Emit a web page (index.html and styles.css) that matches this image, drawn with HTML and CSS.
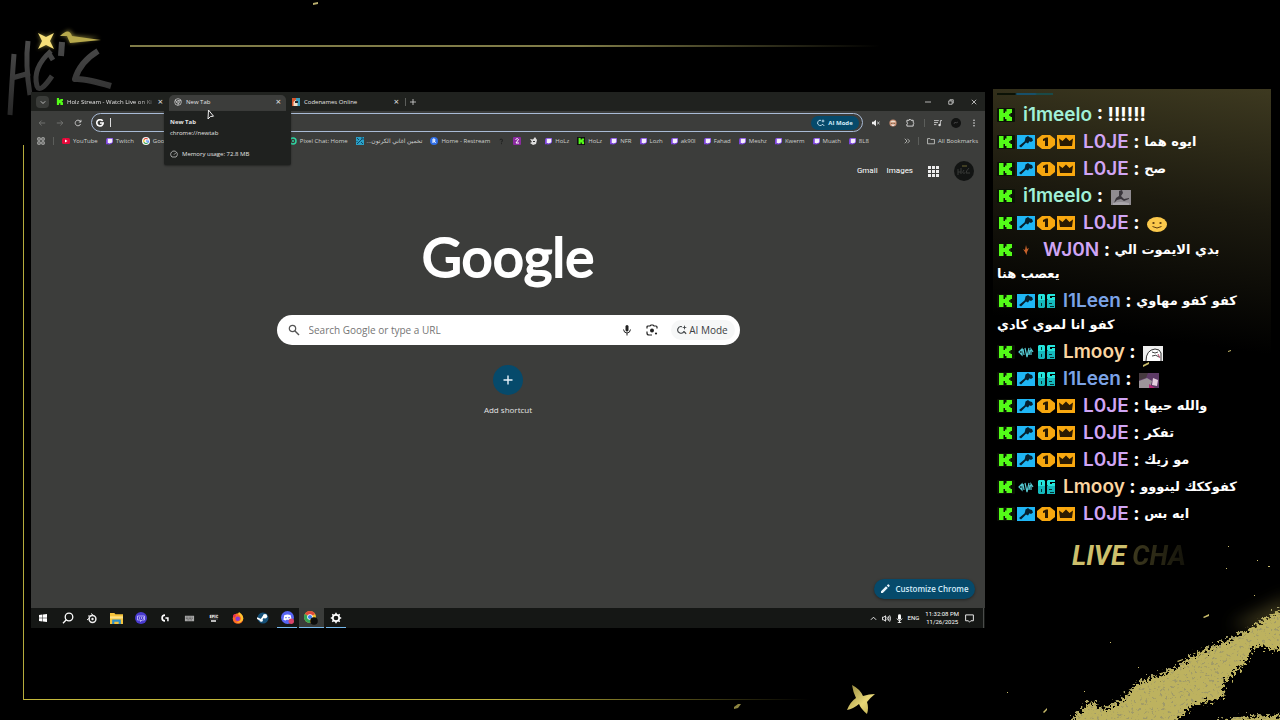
FILE: index.html
```html
<!DOCTYPE html>
<html lang="en">
<head>
  <meta charset="UTF-8">
  <meta name="viewport" content="width=device-width, initial-scale=1.0">
  <title>Holz Stream</title>
  <link rel="stylesheet" href="styles.css">
</head>
<body>
  <!-- shared icons -->
  <svg class="sprite" aria-hidden="true">
    <symbol id="kick" viewBox="0 0 18 14">
      <rect width="18" height="14" rx="1" fill="#0b1206"/>
      <path d="M2 1h4.500v4H8V3.500h1.500V1H15v4h-1.500v1.300H12v1.400h1.500V9H15v4H9.500v-2H8V9H6.500v4H2z" fill="#53fc18"/>
    </symbol>
    <symbol id="mod" viewBox="0 0 18 14">
      <rect width="18" height="14" fill="#1fb6f5"/>
      <path d="M8.500 2.500 11 1l1.500 1.200 2.500.8 1 2.500-2 1.500-1.500-.7-1.500 2.200-2-1L4 12.500 2 11l5.500-4.500L8 5z" fill="#06202e"/>
    </symbol>
    <symbol id="one" viewBox="0 0 18 14">
      <path d="M5 0h8l5 4v6l-5 4H5l-5-4V4z" fill="#f7a70f"/>
      <path d="M6 4 9 2.500h2V11H8V5.400L6 6z" fill="#2a1a02"/>
    </symbol>
    <symbol id="crown" viewBox="0 0 18 14">
      <rect width="18" height="14" fill="#f9a80f"/>
      <path d="M2 3.500 5.500 6 9 2.500 12.500 6 16 3.500 15 11H3z" fill="#2a1a02"/>
    </symbol>
    <symbol id="og" viewBox="0 0 18 14">
      <path d="M2 0h5l1 1v5H1V1zM11 0h7v2h-5v2h2V3h3v3h-7l-1-1V1z" fill="#24e5dc"/>
      <path d="M1 6h7v7l-1 1H2l-1-1zM10 6h8v8h-8z" fill="#16b9bd"/>
      <path d="M4 2h1v3H4zM4 9h1v3H4zM12 9h3v1h-3zM13 12h4v1h-4z" fill="#053437"/>
    </symbol>
    <symbol id="wing" viewBox="0 0 18 14">
      <path d="M2 7l3-3v6zM6 4l1 6M8 3l2 9 2-9M13 5l-1 5M16 7l-2-3v6" fill="none" stroke="#55c9d2" stroke-width="1.200"/>
    </symbol>
    <symbol id="flame" viewBox="0 0 18 14">
      <path d="M9 2l1 4 2-1-2 4-.5 3L8 9 6 6l2 1z" fill="#c8622b"/>
    </symbol>
    <symbol id="twitch" viewBox="0 0 8 8">
      <path d="M1 0h7v5L5.500 7H4L3 8V7H0V2z" fill="#7d45dd"/>
      <path d="M2 .8h5.200v3.700L6 5.600H4.500l-1 1v-1H2z" fill="#f4eefc"/>
    </symbol>
    <symbol id="kickmark" viewBox="0 0 8 8">
      <path d="M1 0h2.500v2H5V1h3v2L6.500 4 8 5v3H5V6H3.500v2H1z" fill="#53fc18"/>
    </symbol>
    <symbol id="spark" viewBox="0 0 12 12">
      <path d="M6 2A4 4 0 1 0 8.500 7.500M8 7.500l3 3" fill="none" stroke="currentColor" stroke-width="1.300"/>
      <path d="M9 0l.7 2.300L12 3l-2.300.7L9 6l-.7-2.300L6 3l2.300-.7z" fill="currentColor"/>
    </symbol>
    <symbol id="chrome" viewBox="0 0 12 12">
      <circle cx="6" cy="6" r="6" fill="#f2c230"/>
      <path d="M6 6 .8 3A6 6 0 0 1 11.200 3z" fill="#e04a3c"/>
      <path d="M6 6 .8 3A6 6 0 0 0 6 12z" fill="#35a457"/>
      <circle cx="6" cy="6" r="2.800" fill="#fff"/>
      <circle cx="6" cy="6" r="2.100" fill="#3d7ee8"/>
    </symbol>
  </svg>

  <div class="stage">
    <div class="frame-top"></div>
    <div class="frame-left"></div>

    <svg class="holz" viewBox="0 0 330 110" width="330" height="110" role="img" aria-label="Holz">
      <defs>
        <linearGradient id="fade" gradientUnits="userSpaceOnUse" x1="0" y1="30" x2="0" y2="110">
          <stop offset="0" stop-color="#4c4c4c"/>
          <stop offset="1" stop-color="#262626"/>
        </linearGradient>
        <filter id="glow" x="-50%" y="-50%" width="200%" height="200%">
          <feGaussianBlur stdDeviation="2"/>
        </filter>
      </defs>
      <g stroke="url(#fade)" fill="none" stroke-linejoin="round">
        <path d="M14 46Q12 72 10 107M28 33Q25 56 30 87M12 70L30 65" stroke-width="5"/>
        <path d="M51 43Q32 60 37 78Q40 86 52 68M48 44l5 8" stroke-width="5"/>
        <path d="M62 34l-1 14" stroke-width="6"/>
        <path d="M98 43Q80 54 75 71Q84 70 111 78" stroke-width="6"/>
      </g>
      <g fill="#d8c95a" filter="url(#glow)" opacity=".6">
        <path d="M38 25l8 4 8-4-4 8 4 8-8-4-8 4 4-8z"/>
        <path d="M60 28l9-6 5 6 26 2-30 5-3-7z"/>
      </g>
      <path d="M38 25l8 4 8-4-4 8 4 8-8-4-8 4 4-8z" fill="#f6df79"/>
      <path d="M60 28q9-9 12 0l29 4-31 3-3-7z" fill="#b7a94c"/>
      <path d="M313 -5l5-1v2l-5 1z" fill="#b9ae6e"/>
    </svg>

    <main class="desktop">
      <section class="window">
        <div class="tab-strip">
          <button class="tab-search" aria-label="Search tabs">
            <svg viewBox="0 0 8 8" width="6" height="6"><path d="M1 3l3 3 3-3" class="line"/></svg>
          </button>
          <div class="tab">
            <svg width="7" height="7"><use href="#kickmark"/></svg>
            <span class="tab-title faded">Holz Stream - Watch Live on Ki</span>
            <button class="tab-close" aria-label="Close">×</button>
          </div>
          <div class="tab active">
            <svg viewBox="0 0 12 12" width="8" height="8"><circle cx="6" cy="6" r="5" class="line"/><circle cx="6" cy="6" r="2" class="line"/><path d="M6 4h5M4.300 7L2 3M7.700 7L5.500 11" class="line"/></svg>
            <span class="tab-title">New Tab</span>
            <button class="tab-close" aria-label="Close">×</button>
            <div class="tab-card" role="tooltip">
              <strong>New Tab</strong>
              <span>chrome://newtab</span>
              <p>
                <svg viewBox="0 0 12 12" width="8" height="8"><path d="M3 10.500A5 5 0 1 1 9 10.500zM6 7l3-3" class="line"/></svg>
                Memory usage: 72.8 MB
              </p>
            </div>
            <svg class="cursor" viewBox="0 0 8 11" width="8" height="11"><path d="M1.500 1l5 6.200-3 .3L1 10z" fill="#222" stroke="#eee"/></svg>
          </div>
          <div class="tab">
            <svg viewBox="0 0 8 8" width="8" height="8"><path d="M0 0h4v8H0z" fill="#d4572e"/><path d="M4 0h4v8H4z" fill="#3c9dbb"/><path d="M1.500 8V4l2-2 2 2v4z" fill="#f3dfc8"/><path d="M3 3h3v2H3z" fill="#25252a"/></svg>
            <span class="tab-title">Codenames Online</span>
            <button class="tab-close" aria-label="Close">×</button>
          </div>
          <i class="rule"></i>
          <button class="new-tab" aria-label="New tab">
            <svg viewBox="0 0 8 8" width="6" height="6"><path d="M4 0v8M0 4h8" class="line"/></svg>
          </button>
          <div class="window-buttons">
            <button aria-label="Minimize"><svg viewBox="0 0 8 8" width="6" height="6"><path d="M0 4h8" class="line"/></svg></button>
            <button aria-label="Restore"><svg viewBox="0 0 8 8" width="6" height="6"><path d="M1 2.500h4.500V7H1zM2.500 2V1H7v4.500H6" class="line"/></svg></button>
            <button aria-label="Close window"><svg viewBox="0 0 8 8" width="6" height="6"><path d="M1 1l6 6M7 1L1 7" class="line"/></svg></button>
          </div>
        </div>

        <div class="toolbar">
          <button class="dim" aria-label="Back"><svg viewBox="0 0 10 10" width="8" height="8"><path d="M9 5H1.500M4.500 2l-3 3 3 3" class="line"/></svg></button>
          <button class="dim" aria-label="Forward"><svg viewBox="0 0 10 10" width="8" height="8"><path d="M1 5h7.500M5.500 2l3 3-3 3" class="line"/></svg></button>
          <button aria-label="Reload"><svg viewBox="0 0 10 10" width="8" height="8"><path d="M8.300 6.200A3.500 3.500 0 1 1 7.500 2.500L8.500 3.500M8.700 1v2.800H6" class="line"/></svg></button>
          <div class="omnibox">
            <svg viewBox="0 0 10 10" width="8" height="8"><path d="M8.300 2.500A4 4 0 1 0 9 5H5" fill="none" stroke="#fff" stroke-width="2"/></svg>
            <i class="caret"></i>
            <input type="text" aria-label="Address and search bar">
            <button class="ai-chip"><svg width="8" height="8"><use href="#spark"/></svg>AI Mode</button>
          </div>
          <div class="extensions">
            <button aria-label="Muted"><svg viewBox="0 0 10 10" width="8" height="8"><path d="M0 3.500h2L5 1v8L2 6.500H0z" fill="#eee"/><path d="M6.500 3.500l3 3M9.500 3.500l-3 3" class="line"/></svg></button>
            <button aria-label="Extension"><svg viewBox="0 0 10 10" width="8" height="8"><circle cx="5" cy="5" r="4.500" fill="#c98c70"/><path d="M1 4q4-4 8 0z" fill="#eadfcf"/><path d="M3 5h1v1H3zM6 5h1v1H6z" fill="#342"/><path d="M2 7h6l-3 2z" fill="#eee"/></svg></button>
            <button aria-label="Extensions"><svg viewBox="0 0 10 10" width="9" height="9"><path d="M1 2.500h2.500Q4-.2 5.500 2.500H8v2.300q2 1 0 2V9H1V6.700q2-1 0-2z" class="line"/></svg></button>
            <i class="rule"></i>
            <button aria-label="Media"><svg viewBox="0 0 10 10" width="8" height="8"><path d="M0 2h6M0 4.500h5M0 7h3M8 7V2h2" class="line"/><circle cx="7" cy="7.500" r="1.500" fill="#ddd"/></svg></button>
            <button aria-label="Profile"><svg viewBox="0 0 10 10" width="10" height="10"><circle cx="5" cy="5" r="5" fill="#121312"/><path d="M3 6l1-2 1 1 2-1" stroke="#555" stroke-width=".6" fill="none"/></svg></button>
            <button aria-label="Menu"><svg viewBox="0 0 10 10" width="8" height="8"><g fill="#ddd"><circle cx="5" cy="1.500" r="1"/><circle cx="5" cy="5" r="1"/><circle cx="5" cy="8.500" r="1"/></g></svg></button>
          </div>
        </div>

        <nav class="bookmarks">
          <button aria-label="Apps"><svg viewBox="0 0 10 10" width="8" height="8"><path d="M1 1h3v3H1zM6 1h3v3H6zM1 6h3v3H1zM6 6h3v3H6z" class="line"/></svg></button>
          <i class="rule"></i>
          <a href="#"><svg viewBox="0 0 8 8" width="8" height="8"><rect y="1" width="8" height="6" rx="1.500" fill="#e5093a"/><path d="M3 2.500L5.500 4 3 5.500z" fill="#fff"/></svg>YouTube</a>
          <a href="#"><svg width="7" height="7"><use href="#twitch"/></svg>Twitch</a>
          <a href="#" class="covered"><svg viewBox="0 0 12 12" width="8" height="8"><circle cx="6" cy="6" r="6" fill="#f5f5f5"/><path d="M3 4a3.500 3.500 0 0 1 5.500-.8" stroke="#e34133" stroke-width="1.600" fill="none"/><path d="M3 4q-.8 2 0 4" stroke="#f4b400" stroke-width="1.600" fill="none"/><path d="M3 8a3.600 3.600 0 0 0 5.500.8" stroke="#33a853" stroke-width="1.600" fill="none"/><path d="M8.500 8.800Q9.800 7.500 9.500 6H6" stroke="#4285f4" stroke-width="1.600" fill="none"/></svg>Google</a>
          <a href="#"><svg viewBox="0 0 8 8" width="8" height="8"><circle cx="4" cy="4" r="3" stroke="#2ed3a0" stroke-width="1.500" fill="none"/><circle cx="4" cy="4" r="1" fill="#2ed3a0"/></svg>Pixel Chat: Home</a>
          <a href="#"><svg viewBox="0 0 8 8" width="8" height="8"><path d="M0 0h8v8H0z" fill="#2aa0c6"/><path d="M1 1l2 2M5 1h2v2M1 7l5-5M5 5l2 2M1 4v1" stroke="#0d4867" fill="none"/></svg><span lang="ar" dir="rtl">تخمين اغاني الكرتون...</span></a>
          <a href="#"><svg viewBox="0 0 8 8" width="8" height="8"><circle cx="4" cy="4" r="4" fill="#2f6ee6"/><path d="M3 6V2h1.500q1 1 0 2H3M4.300 4L5.500 6" stroke="#fff" fill="none"/></svg>Home - Restream</a>
          <a href="#" aria-label="Saved page"><svg viewBox="0 0 8 8" width="7" height="7"><path d="M2 2q3-2 3 1L4 5M4 6v1" stroke="#171817" fill="none"/></svg></a>
          <a href="#" aria-label="Saved page"><svg viewBox="0 0 8 8" width="8" height="8"><rect width="8" height="8" rx="1" fill="#8b2aa0"/><path d="M2.500 2.500q2-2 3 0L3 6h3" stroke="#fff" fill="none"/></svg></a>
          <a href="#" aria-label="Saved page"><svg viewBox="0 0 8 8" width="8" height="8"><path d="M1 2l3 .5L6 0l2 3-1 4-3 1-3-2 2-1z" fill="#dcdcdc"/><path d="M4 4h2v1H4z" fill="#333"/></svg></a>
          <a href="#"><svg width="7" height="7"><use href="#twitch"/></svg>HoLz</a>
          <a href="#"><svg viewBox="-1 -1 10 10" width="8" height="8"><path d="M-1-1h10V9H-1z" fill="#111"/><use href="#kickmark" width="8" height="8"/></svg>HoLz</a>
          <a href="#"><svg width="7" height="7"><use href="#twitch"/></svg>NFR</a>
          <a href="#"><svg width="7" height="7"><use href="#twitch"/></svg>Lozh</a>
          <a href="#"><svg width="7" height="7"><use href="#twitch"/></svg>ak90l</a>
          <a href="#"><svg width="7" height="7"><use href="#twitch"/></svg>Fahad</a>
          <a href="#"><svg width="7" height="7"><use href="#twitch"/></svg>Meshz</a>
          <a href="#"><svg width="7" height="7"><use href="#twitch"/></svg>Kwerm</a>
          <a href="#"><svg width="7" height="7"><use href="#twitch"/></svg>Muath</a>
          <a href="#"><svg width="7" height="7"><use href="#twitch"/></svg>8L8</a>
          <div class="bookmarks-end">
            <button aria-label="More bookmarks"><svg viewBox="0 0 8 8" width="6" height="6"><path d="M1 1l3 3-3 3M4.500 1l3 3-3 3" class="line"/></svg></button>
            <i class="rule"></i>
            <a href="#"><svg viewBox="0 0 10 10" width="8" height="8"><path d="M.7 2h3l1 1h4.600v5.500H.7z" class="line"/></svg>All Bookmarks</a>
          </div>
        </nav>

        <div class="page">
          <header class="page-links">
            <a href="#">Gmail</a>
            <a href="#">Images</a>
            <button aria-label="Google apps"><svg viewBox="0 0 11 11" width="11" height="11"><g fill="#eee"><path d="M0 0h3v3H0zM4 0h3v3H4zM8 0h3v3H8zM0 4h3v3H0zM4 4h3v3H4zM8 4h3v3H8zM0 8h3v3H0zM4 8h3v3H4zM8 8h3v3H8z"/></g></svg></button>
            <button aria-label="Account"><svg viewBox="0 0 20 20" width="20" height="20"><circle cx="10" cy="10" r="10" fill="#121413"/><path d="M4 8v6M7 7v6M4 11h3M10 9q-3 4 1 3M15 7q-3 3-3 5l4 0" stroke="#383a38" fill="none"/><path d="M8 5l5 0" stroke="#6d6732"/></svg></button>
          </header>
          <h1 class="google">Google</h1>
          <form class="search">
            <svg viewBox="0 0 12 12" width="12" height="12"><circle cx="4.500" cy="4.500" r="3.200" fill="none" stroke="#555" stroke-width="1.200"/><path d="M7 7l4 4" stroke="#555" stroke-width="1.400"/></svg>
            <input type="text" placeholder="Search Google or type a URL" aria-label="Search Google or type a URL">
            <button type="button" aria-label="Voice search"><svg viewBox="0 0 12 12" width="12" height="12"><rect x="4.500" y="1" width="3" height="6.500" rx="1.500" fill="#222"/><path d="M2.500 5.500q.5 3.500 3.500 3.500t3.500-3.500M6 9v2.500" fill="none" stroke="#222"/></svg></button>
            <button type="button" aria-label="Image search"><svg viewBox="0 0 12 12" width="12" height="12"><path d="M1 4.500V3q0-1 1-1h2l1-1h2l1 1h2q1 0 1 1v1.500M1 7.500V9q0 2 2 2h3" fill="none" stroke="#222" stroke-width="1.200"/><circle cx="6" cy="6.500" r="2" fill="#222"/><circle cx="10" cy="9.500" r="1.100" fill="#222"/></svg></button>
            <button type="button" class="ai-mode"><svg width="10" height="10"><use href="#spark"/></svg>AI Mode</button>
          </form>
          <button class="shortcut">
            <span class="plus"><svg viewBox="0 0 10 10" width="10" height="10"><path d="M5 .5v9M.5 5h9" stroke="#e8f4fb" stroke-width="1.400"/></svg></span>
            Add shortcut
          </button>
          <button class="customize">
            <svg viewBox="0 0 10 10" width="10" height="10"><path d="M1 7.200L6 2.200 7.800 4l-5 5H1zM6.800 1.400l1-1q.5-.3 1 .2l.7.700q.4.500 0 1l-1 1z" fill="#e8f4fb"/></svg>
            Customize Chrome
          </button>
        </div>
      </section>

      <footer class="taskbar">
        <div class="apps">
          <button aria-label="Start"><svg viewBox="0 0 10 10" width="10" height="10"><path d="M1 2l3.500-.5v3.200H1zM5 1.400L9 1v3.700H5zM1 5.200h3.500v3.300L1 8zM5 5.200h4V9l-4-.5z" fill="#fff"/></svg></button>
          <button aria-label="Search"><svg viewBox="0 0 12 12" width="12" height="12"><circle cx="7" cy="5" r="3.800" fill="none" stroke="#fff" stroke-width="1.300"/><path d="M4.300 7.800L1 11.200" stroke="#fff" stroke-width="1.300"/></svg></button>
          <button aria-label="Blender"><svg viewBox="0 0 12 12" width="12" height="12"><circle cx="6.500" cy="7" r="3.400" fill="none" stroke="#eee" stroke-width="1.500"/><circle cx="6.500" cy="7" r="1.200" fill="#eee"/><path d="M1 8l3-2.500M5 1.500l2.500 2M2 4h3" stroke="#eee"/></svg></button>
          <button aria-label="Files"><svg viewBox="0 0 12 12" width="13" height="13"><path d="M0 1h4l1 1h7v9H0z" fill="#f5c33b"/><path d="M0 4h12v2H0z" fill="#ffe083"/><path d="M2 11V7h8v4H8V9H4v2z" fill="#2d8fc9"/></svg></button>
          <button aria-label="Voice app"><svg viewBox="0 0 12 12" width="12" height="12"><circle cx="6" cy="6" r="6" fill="#4a3bd0"/><path d="M2.500 4h7v4H7L5.500 9.500V8h-3z" fill="none" stroke="#c9c2ff" stroke-width=".8"/><path d="M4 6h1M6 6h1M8 6h1" stroke="#fff"/></svg></button>
          <button aria-label="G Hub"><svg viewBox="0 0 12 12" width="10" height="10"><path d="M6 2.500A3.500 3.500 0 0 0 6 9.500" fill="none" stroke="#fff" stroke-width="2"/><path d="M6.500 6h3v4" fill="none" stroke="#fff" stroke-width="1.800"/></svg></button>
          <button aria-label="Keyboard"><svg viewBox="0 0 12 12" width="11" height="11"><rect x="1" y="3" width="10" height="6" fill="#aaa"/><path d="M2 4.500h8M2 6h8M3 7.500h6" stroke="#333" stroke-width=".7" stroke-dasharray="1 .6"/></svg></button>
          <button class="epic" aria-label="Epic Games"><span>EPIC</span><i></i></button>
          <button aria-label="Firefox"><svg viewBox="0 0 12 12" width="12" height="12"><circle cx="6" cy="6.500" r="5.300" fill="#ff6a26"/><path d="M7 0q5 3 4 8Q8 12 4 10q5 0 5-4-1-3-3-4z" fill="#ffc12e"/><circle cx="5.700" cy="6.700" r="2.300" fill="#8c3bd4"/><path d="M1 3l2-1 1 2-2 2z" fill="#e72f59"/></svg></button>
          <button aria-label="Steam"><svg viewBox="0 0 12 12" width="12" height="12"><circle cx="6" cy="6" r="5.500" fill="#155078"/><path d="M0 6l4 2 3-4" stroke="#fff" stroke-width="1.800" fill="none"/><circle cx="8" cy="4.300" r="2.200" fill="#fff"/><circle cx="4.300" cy="8.300" r="1.500" fill="#fff"/></svg></button>
          <button class="running" aria-label="Discord"><svg viewBox="0 0 12 12" width="13" height="13"><circle cx="6" cy="6" r="6" fill="#5865f2"/><path d="M3 4q3-1.500 6 0l.8 4-2 .800L7 8H5l-.8.8-2-.8z" fill="#fff"/><path d="M4 5.500h1.200v1.200H4zM6.800 5.500H8v1.200H6.800z" fill="#5865f2"/><circle cx="9.500" cy="9.500" r="2.500" fill="#d9446a"/></svg></button>
          <button class="running current" aria-label="Chrome"><svg viewBox="0 0 14 14" width="14" height="14"><use href="#chrome" width="12" height="12"/><circle cx="10" cy="10" r="3.800" fill="#0d0e0d"/></svg></button>
          <button class="running" aria-label="Settings"><svg viewBox="0 0 12 12" width="12" height="12"><circle cx="6" cy="6" r="3.200" fill="none" stroke="#fff" stroke-width="1.700"/><path d="M6 .8v2M6 9.200v2M.8 6h2M9.200 6h2M2.300 2.300l1.400 1.400M8.300 8.300l1.400 1.400M9.700 2.300L8.300 3.700M3.700 8.300L2.300 9.700" stroke="#fff" stroke-width="1.500"/></svg></button>
        </div>
        <div class="tray">
          <button aria-label="Hidden icons"><svg viewBox="0 0 8 8" width="7" height="7"><path d="M1 5.500L4 2.500l3 3" class="line"/></svg></button>
          <button aria-label="Volume"><svg viewBox="0 0 10 10" width="9" height="9"><path d="M.5 3.500h1.500L4 2v6L2 6.500H.5zM5.500 3.500q1 1.500 0 3M7 2.500q1.500 2.500 0 5M8.500 1.500q2 3.500 0 7" class="line"/></svg></button>
          <button aria-label="Microphone"><svg viewBox="0 0 8 10" width="7" height="9"><rect x="2.300" width="3.400" height="6.500" rx="1.700" fill="#fff"/><path d="M1 5q3 5 6 0M4 7v2.500M2 9.500h4" stroke="#fff" fill="none"/></svg></button>
          <span>ENG</span>
          <time datetime="2025-11-26T23:32:08">11:32:08 PM<br>11/26/2025</time>
          <button aria-label="Notifications"><svg viewBox="0 0 10 10" width="9" height="9"><path d="M.7 1h8.600v6.500H6.500L5 9 3.500 7.500H.7z" class="line"/></svg></button>
          <i></i>
        </div>
      </footer>
    </main>

    <aside class="chat">
      <div class="chat-cut"></div>
      <ul class="messages">
        <li><svg class="badge"><use href="#kick"/></svg><b class="mint">i1meelo</b> : !!!!!!</li>
        <li><svg class="badge"><use href="#kick"/></svg><svg class="badge"><use href="#mod"/></svg><svg class="badge"><use href="#one"/></svg><svg class="badge"><use href="#crown"/></svg><b class="lilac">L0JE</b> : <span lang="ar" dir="rtl">ايوه هما</span></li>
        <li><svg class="badge"><use href="#kick"/></svg><svg class="badge"><use href="#mod"/></svg><svg class="badge"><use href="#one"/></svg><svg class="badge"><use href="#crown"/></svg><b class="lilac">L0JE</b> : <span lang="ar" dir="rtl">صح</span></li>
        <li><svg class="badge"><use href="#kick"/></svg><b class="mint">i1meelo</b> : <svg class="emote" viewBox="0 0 20 15"><path d="M0 0h20v15H0z" fill="#8f8b90"/><path d="M8 1l3-1 1 3-2 3 3 3 5-1v1l-5 2-3-2-4 1-3 3 2-5 3-2z" fill="#39353b"/><path d="M2 13q8-2 16 0v2H2z" fill="#aaa6ab"/></svg></li>
        <li><svg class="badge"><use href="#kick"/></svg><svg class="badge"><use href="#mod"/></svg><svg class="badge"><use href="#one"/></svg><svg class="badge"><use href="#crown"/></svg><b class="lilac">L0JE</b> : <svg class="emote" viewBox="0 0 20 15"><ellipse cx="10" cy="7.500" rx="10" ry="7.500" fill="#fbc94c"/><ellipse cx="6.500" cy="6" rx="1.200" ry="1" fill="#5b3b10"/><ellipse cx="13.500" cy="6" rx="1.200" ry="1" fill="#5b3b10"/><path d="M5.500 9.500q4.500 3 9 0" fill="none" stroke="#5b3b10"/></svg></li>
        <li><svg class="badge"><use href="#kick"/></svg><svg class="badge"><use href="#flame"/></svg><b class="lilac">WJ0N</b> : <span lang="ar" dir="rtl">بدي الايموت الي</span><br><span lang="ar" dir="rtl">يعصب هنا</span></li>
        <li><svg class="badge"><use href="#kick"/></svg><svg class="badge"><use href="#mod"/></svg><svg class="badge"><use href="#og"/></svg><b class="blue">l1Leen</b> : <span lang="ar" dir="rtl">كفو كفو مهاوي</span><br><span lang="ar" dir="rtl">كفو انا لموي كادي</span></li>
        <li><svg class="badge"><use href="#kick"/></svg><svg class="badge"><use href="#wing"/></svg><svg class="badge"><use href="#og"/></svg><b class="peach">Lmooy</b> : <svg class="emote" viewBox="0 0 20 15"><path d="M0 0h20v15H0z" fill="#eee"/><path d="M3 15Q3 4 12 3q5 0 6 4v8" fill="#fff" stroke="#333"/><path d="M9 6q3 2 6 0M9 10q4-2 7 1" stroke="#444" fill="none"/><path d="M15 8l2 4" stroke="#b34a6c"/></svg></li>
        <li><svg class="badge"><use href="#kick"/></svg><svg class="badge"><use href="#mod"/></svg><svg class="badge"><use href="#og"/></svg><b class="blue">l1Leen</b> : <svg class="emote" viewBox="0 0 20 15"><path d="M0 0h20v15H0z" fill="#5d3a66"/><path d="M0 0h9L7 5 0 7z" fill="#463a3f"/><path d="M0 8l8-3 5 3-2 7H0z" fill="#9c949a"/><path d="M14 5l5 2-1 6-5-1z" fill="#e6cfe0"/><path d="M10 11l6 4h-6z" fill="#b22a77"/></svg></li>
        <li><svg class="badge"><use href="#kick"/></svg><svg class="badge"><use href="#mod"/></svg><svg class="badge"><use href="#one"/></svg><svg class="badge"><use href="#crown"/></svg><b class="lilac">L0JE</b> : <span lang="ar" dir="rtl">والله حيها</span></li>
        <li><svg class="badge"><use href="#kick"/></svg><svg class="badge"><use href="#mod"/></svg><svg class="badge"><use href="#one"/></svg><svg class="badge"><use href="#crown"/></svg><b class="lilac">L0JE</b> : <span lang="ar" dir="rtl">تفكر</span></li>
        <li><svg class="badge"><use href="#kick"/></svg><svg class="badge"><use href="#mod"/></svg><svg class="badge"><use href="#one"/></svg><svg class="badge"><use href="#crown"/></svg><b class="lilac">L0JE</b> : <span lang="ar" dir="rtl">مو زيك</span></li>
        <li><svg class="badge"><use href="#kick"/></svg><svg class="badge"><use href="#wing"/></svg><svg class="badge"><use href="#og"/></svg><b class="peach">Lmooy</b> : <span lang="ar" dir="rtl">كفوككك لينووو</span></li>
        <li><svg class="badge"><use href="#kick"/></svg><svg class="badge"><use href="#mod"/></svg><svg class="badge"><use href="#one"/></svg><svg class="badge"><use href="#crown"/></svg><b class="lilac">L0JE</b> : <span lang="ar" dir="rtl">ايه بس</span></li>
      </ul>
      <h2 class="live">LIVE <span>CHA</span></h2>
    </aside>

    <!-- gold dust in the corner -->
    <svg class="dust" viewBox="-100 -200 560 380" width="560" height="380" aria-hidden="true">
      <defs>
        <filter id="rough" x="-10%" y="-20%" width="120%" height="140%">
          <feTurbulence type="fractalNoise" baseFrequency=".35" numOctaves="3" seed="4" result="n"/>
          <feDisplacementMap in="SourceGraphic" in2="n" scale="18" xChannelSelector="R" yChannelSelector="G" result="d"/>
          <feColorMatrix in="n" values="0 0 0 0 .35  0 0 0 0 .32  0 0 0 0 .14  0 9 0 0 -5.400" result="s"/>
          <feComposite in="s" in2="d" operator="in" result="specks"/>
          <feMerge><feMergeNode in="d"/><feMergeNode in="specks"/></feMerge>
        </filter>
        <filter id="haze" x="-50%" y="-50%" width="200%" height="200%"><feGaussianBlur stdDeviation="8"/></filter>
        <linearGradient id="gold" x1="0" y1="0" x2="1" y2="1">
          <stop offset="0" stop-color="#8f8339"/>
          <stop offset=".6" stop-color="#e9d878"/>
          <stop offset="1" stop-color="#b5a54a"/>
        </linearGradient>
      </defs>
      <path d="M410 85L470 55v40z" fill="#6a6230" opacity=".5" filter="url(#haze)"/>
      <g fill="#bdb25f" filter="url(#rough)">
        <path d="M246 186l24-25 14 8 18-9 14-16 37-14 26-18 34-14 20-12 40-24v46l-18 2-20-4-10 17-20 19-3 16-30 8-20 20z"/>
        <path d="M380 186q40-12 90-10v10z"/>
      </g>
      <path d="M32 145q8 4 11 11 6-2 12-2-5 4-8 8 2 6 0 12-6-5-8-10-6 5-12 6 3-8 9-12-3-6-4-13z" fill="url(#gold)"/>
      <path d="M-86 167l4-3 3 0-3 4-4 1z" fill="#8c8440"/>
      <g fill="#c9bc6b">
        <path d="M383 77l6-3v2l-5 2zM357 121l6-2v1l-5 2zM223 172l4-4v2l-3 3z"/>
        <path d="M406 28h1v1h-1zM437 20h1v1h-1zM448 26h2v1h-2zM408 6h1v1h-1zM290 102h1v1h-1zM264 151h1v1h-1zM187 152h1v1h-1zM318 127h1v1h-1zM434 55h1v1h-1zM408-189l3-1v1l-3 1zM323-175l6-3v2l-6 3z"/>
      </g>
    </svg>
  </div>
</body>
</html>
```
FILE: styles.css
```css
* {
  box-sizing: border-box;
}
body {
  margin: 0;
  background-color: #000;
  color: #e3e3e3;
  font-family: 'Open Sans', 'Noto Sans', 'DejaVu Sans', sans-serif;
  font-size: 6px;
  line-height: 8px;
}
button {
  display: flex;
  align-items: center;
  justify-content: center;
  padding: 0;
  border: 0;
  background: none;
  color: inherit;
  font: inherit;
}
a {
  color: inherit;
  text-decoration: none;
}
input {
  border: 0;
  padding: 0;
  min-width: 0;
  background: none;
  color: inherit;
  font: inherit;
}
svg {
  flex: none;
}
.sprite {
  position: absolute;
  width: 0;
  height: 0;
}
.line {
  fill: none;
  stroke: currentColor;
  stroke-width: 1;
}
.rule {
  flex: none;
  width: 1px;
  height: 8px;
  background-color: #5c5e5b;
}

/* stream layout */
.stage {
  position: relative;
  display: grid;
  grid-template-columns: 1fr 278px;
  gap: 8px;
  min-height: 100vh;
  padding: 89px 9px 92px 31px;
  overflow: hidden;
}
.frame-top {
  position: absolute;
  top: 45px;
  left: 130px;
  right: 400px;
  height: 2px;
  background: linear-gradient(to right, #807c48 60%, transparent);
}
.frame-left {
  position: absolute;
  top: 145px;
  left: 23px;
  right: 470px;
  bottom: 20px;
  background:
    linear-gradient(#b5ab3c, #b5ab3c) left / 1px 100% no-repeat,
    linear-gradient(to right, #c4b93c 60%, transparent) bottom / 100% 1px no-repeat;
}
.holz {
  position: absolute;
  top: 8px;
  left: 0;
  overflow: visible;
}
.dust {
  position: absolute;
  right: 0;
  bottom: 0;
  pointer-events: none;
}

/* browser */
.desktop {
  position: relative;
  display: flex;
  flex-direction: column;
  margin-top: 3px;
}
.window {
  flex: 1;
  display: flex;
  flex-direction: column;
  background-color: #3c3d3b;
}
.tab-strip {
  display: flex;
  align-items: center;
  gap: 1px;
  height: 19px;
  padding-left: 5px;
  background-color: #20221f;
}
.tab-search {
  width: 13px;
  height: 12px;
  margin-right: 1px;
  border-radius: 4px;
  background-color: #3a3c39;
}
.tab {
  position: relative;
  display: flex;
  align-items: center;
  gap: 4px;
  width: 117px;
  height: 19px;
  padding: 0 5px;
}
.tab.active {
  align-self: flex-end;
  height: 16px;
  padding-bottom: 3px;
  border-radius: 5px 5px 0 0;
  background-color: #3c3d3b;
}
.tab-title {
  flex: 1;
  white-space: nowrap;
}
.faded {
  mask-image: linear-gradient(to right, #000 80%, rgba(0, 0, 0, 0.3));
}
.tab-close {
  font-size: 9px;
}
.tab-card {
  position: absolute;
  z-index: 2;
  top: 16px;
  left: -5px;
  display: flex;
  flex-direction: column;
  gap: 3px;
  width: 127px;
  height: 54px;
  padding: 7px 6px;
  border-radius: 0 0 2px 2px;
  background-color: #1f211f;
  box-shadow: 0 1px 2px rgba(0, 0, 0, 0.4);
}
.tab-card p {
  display: flex;
  align-items: center;
  gap: 4px;
  margin: 10px 0 0;
}
.cursor {
  position: absolute;
  z-index: 3;
  top: 14px;
  left: 38px;
}
.new-tab {
  width: 12px;
}
.window-buttons {
  display: flex;
  gap: 17px;
  margin-left: auto;
  padding-right: 8px;
}
.toolbar {
  display: flex;
  align-items: center;
  gap: 10px;
  height: 23px;
  padding: 0 7px;
}
.dim {
  color: #7c7e7b;
}
.omnibox {
  flex: 1;
  display: flex;
  align-items: center;
  height: 19px;
  margin: 0 -1px;
  padding: 0 3px 0 4px;
  border: 1px solid #a9bbd6;
  border-radius: 10px;
}
.caret {
  width: 1px;
  height: 9px;
  margin-left: 6px;
  background-color: #ddd;
}
.omnibox input {
  flex: 1;
}
.ai-chip {
  gap: 3px;
  width: 48px;
  height: 14px;
  border-radius: 7px;
  background-color: #064a6b;
  color: #d3ecfa;
  font-weight: 700;
}
.extensions {
  display: flex;
  align-items: center;
  gap: 9px;
}
.bookmarks {
  display: flex;
  align-items: center;
  gap: 8px;
  height: 16px;
  padding: 0 7px 2px 6px;
  white-space: nowrap;
  color: #cfd0ce;
}
.bookmarks a {
  display: flex;
  align-items: center;
  gap: 3px;
}
.bookmarks .covered {
  width: 139px;
}
.bookmarks-end {
  display: flex;
  align-items: center;
  gap: 8px;
  margin-left: auto;
}

/* new tab page */
.page {
  position: relative;
  flex: 1;
  display: flex;
  flex-direction: column;
  align-items: center;
}
.page-links {
  display: flex;
  align-self: flex-end;
  align-items: center;
  gap: 9px;
  padding: 11px 11px 0 0;
  font-family: Roboto, 'Liberation Sans', sans-serif;
  font-size: 8px;
  color: #fff;
}
.page-links button {
  margin-left: 6px;
}
.google {
  margin: 41px 0 25px;
  color: #fff;
  font-family: Lato, sans-serif;
  font-size: 55px;
  font-weight: 400;
  line-height: 68px;
  -webkit-text-stroke: 2px #fff;
}
.search {
  display: flex;
  align-items: center;
  gap: 13px;
  width: 463px;
  max-width: 90%;
  height: 30px;
  padding: 0 5px 0 11px;
  border-radius: 15px;
  background-color: #fff;
  color: #3c4043;
  font-size: 10px;
}
.search input {
  flex: 1;
  margin-left: -4px;
}
.search input::placeholder {
  color: #757575;
  opacity: 1;
}
.ai-mode {
  gap: 2px;
  width: 64px;
  height: 20px;
  border-radius: 10px;
  background-color: #f6f7f7;
}
.shortcut {
  flex-direction: column;
  gap: 10px;
  margin-top: 20px;
  font-size: 8px;
  line-height: 10px;
}
.plus {
  display: flex;
  align-items: center;
  justify-content: center;
  width: 30px;
  height: 30px;
  border-radius: 50%;
  background-color: #064a6b;
}
.customize {
  position: absolute;
  right: 10px;
  bottom: 9px;
  gap: 5px;
  width: 101px;
  height: 20px;
  border-radius: 10px;
  background-color: #064a6b;
  color: #d3ecfa;
  font-size: 8px;
  font-weight: 600;
  box-shadow: 0 1px 3px rgba(0, 0, 0, 0.4);
}

/* taskbar */
.taskbar {
  display: flex;
  justify-content: space-between;
  height: 20px;
  background-color: #151715;
}
.apps {
  display: grid;
  grid-template-columns: repeat(13, 1fr);
  width: 317px;
}
.running {
  margin: 0 2px;
  border-bottom: 1px solid #76b9ed;
}
.current {
  margin: 0;
  background-color: #3a3c3a;
}
.epic {
  flex-direction: column;
  color: #fff;
  font-size: 4px;
  font-weight: 700;
  line-height: 6px;
}
.epic span {
  background-color: #333;
}
.epic i {
  width: 5px;
  height: 2px;
  background-color: #bbb;
}
.tray {
  display: flex;
  align-items: center;
  gap: 5px;
  color: #fff;
  font-family: Roboto, sans-serif;
}
.tray time {
  margin: 0 1px;
  text-align: center;
}
.tray > i {
  width: 1px;
  height: 20px;
  margin: 0 1px 0 4px;
  background-color: #4a4c4a;
}

/* chat */
.chat {
  padding: 4px 4px 0;
  background: linear-gradient(188deg, #3d3920 0, #1c1a0f 22%, #000 46%);
  color: #fff;
  font-family: Inter, 'DejaVu Sans', sans-serif;
  font-size: 19px;
  font-weight: 700;
  line-height: 24px;
}
.chat-cut {
  width: 56px;
  height: 2px;
  background: linear-gradient(to right, #0b1206 18px, #17506a 20px, #17506a 38px, #1a4a48 40px);
}
.messages {
  display: flex;
  flex-direction: column;
  gap: 3px;
  margin: 8px 0 0;
  padding: 0;
  list-style: none;
}
.messages span {
  font-family: 'DejaVu Sans', sans-serif;
  font-size: 13px;
  line-height: 1px;
  vertical-align: 2px;
}
.badge {
  width: 18px;
  height: 14px;
  margin-right: 2px;
  vertical-align: -1px;
}
.messages b {
  margin-left: 6px;
  font-weight: 600;
}
.emote {
  width: 20px;
  height: 15px;
  margin-left: 3px;
  vertical-align: -3px;
}
.mint {
  color: #a0f0d8;
}
.lilac {
  color: #d0a5f5;
}
.blue {
  color: #7ba3e6;
}
.peach {
  color: #fbd5a0;
}
.live {
  margin: 14px 0 0 75px;
  color: #cdbf6c;
  font-family: Roboto, sans-serif;
  font-size: 27px;
  font-style: italic;
  font-weight: 700;
  line-height: 32px;
}
.live span {
  background: linear-gradient(to right, #3d391e, #14130a);
  background-clip: text;
  color: transparent;
}
```
